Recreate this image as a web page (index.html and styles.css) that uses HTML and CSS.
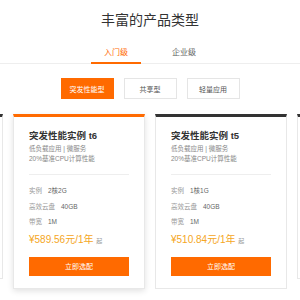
FILE: index.html
```html
<!DOCTYPE html>
<html lang="zh-CN">
<head>
  <meta charset="UTF-8" />
  <title>丰富的产品类型</title>
  <link rel="stylesheet" href="styles.css">
</head>
<body>

  <div class="title">丰富的产品类型</div>

  <div class="tabs">
    <div class="tab active">入门级</div>
    <div class="tab">企业级</div>
  </div>

  <div class="types">
    <button class="type active">突发性能型</button>
    <button class="type">共享型</button>
    <button class="type">轻量应用</button>
  </div>

  <div class="cards">
    <div class="card ghost"></div>
    <div class="card active">
      <div class="card-title">突发性能实例 t6</div>
      <div class="desc">低负载应用 | 微服务</div>
      <div class="desc">20%基准CPU计算性能</div>
      <div class="line"></div>
      <div class="spec"><span>实例</span>2核2G</div>
      <div class="spec"><span>高效云盘</span>40GB</div>
      <div class="spec"><span>带宽</span>1M</div>
      <div class="price">¥589.56元/1年 <small>起</small></div>
      <button class="buy">立即选配</button>
    </div>
    <div class="card">
      <div class="card-title">突发性能实例 t5</div>
      <div class="desc">低负载应用 | 微服务</div>
      <div class="desc">20%基准CPU计算性能</div>
      <div class="line"></div>
      <div class="spec"><span>实例</span>1核1G</div>
      <div class="spec"><span>高效云盘</span>40GB</div>
      <div class="spec"><span>带宽</span>1M</div>
      <div class="price">¥510.84元/1年 <small>起</small></div>
      <button class="buy">立即选配</button>
    </div>
    <div class="card ghost"></div>
  </div>

</body>
</html>
```

FILE: styles.css
```css
body {
  margin: 0;
  width: 300px;
  height: 300px;
  overflow: hidden;
  font-family: "Liberation Sans", "Noto Sans CJK SC", sans-serif;
  background-color: #ffffff;
  color: #333;
}

.title {
  margin-top: 10px;
  text-align: center;
  font-size: 14px;
  line-height: 20px;
  color: #333;
}

.tabs {
  margin-top: 13px;
  display: flex;
  justify-content: center;
  gap: 18px;
  border-bottom: 1px solid #eee;
}

.tab {
  width: 50px;
  text-align: center;
  font-size: 8px;
  line-height: 19px;
  color: #666;
  border-bottom: 2px solid transparent;
  margin-bottom: -1px;
}

.tab.active {
  color: #ff6a00;
  border-bottom-color: #ff6a00;
}

.types {
  margin-top: 14px;
  display: flex;
  justify-content: center;
  gap: 10px;
}

.type {
  width: 53px;
  height: 21px;
  padding: 0;
  font-family: inherit;
  font-size: 7px;
  color: #555;
  background-color: #fff;
  border: 1px solid #e5e5e5;
}

.type.active {
  color: #fff;
  background-color: #ff6a00;
  border-color: #ff6a00;
}

.cards {
  margin-top: 15px;
  display: flex;
  justify-content: center;
  align-items: flex-start;
  gap: 10px;
}

.card {
  flex: 0 0 132px;
  box-sizing: border-box;
  padding: 13px 15px 12px;
  border: 1px solid #e8e8e8;
  border-top: 3px solid #333;
  background-color: #fff;
}

.card.ghost {
  height: 165px;
}

.card.active {
  border-top-color: #ff6a00;
  box-shadow: 0 2px 6px rgba(0, 0, 0, 0.12);
}

.card-title {
  font-size: 9.5px;
  line-height: 12px;
  font-weight: bold;
  color: #333;
}

.desc {
  font-size: 6.5px;
  line-height: 10px;
  color: #888;
}

.card-title + .desc {
  margin-top: 2px;
}

.line {
  height: 1px;
  margin: 10px 0 8px;
  background-color: #eee;
}

.spec {
  font-size: 6.5px;
  line-height: 15.5px;
  color: #666;
}

.spec span {
  color: #999;
  margin-right: 6px;
}

.price {
  margin-top: 2px;
  font-size: 10px;
  line-height: 16px;
  color: #f5a623;
}

.price small {
  font-size: 6px;
  color: #999;
}

.buy {
  display: block;
  width: 100%;
  height: 19px;
  margin-top: 8px;
  padding: 0;
  border: none;
  font-family: inherit;
  font-size: 7px;
  color: #fff;
  background-color: #ff6a00;
}
```
